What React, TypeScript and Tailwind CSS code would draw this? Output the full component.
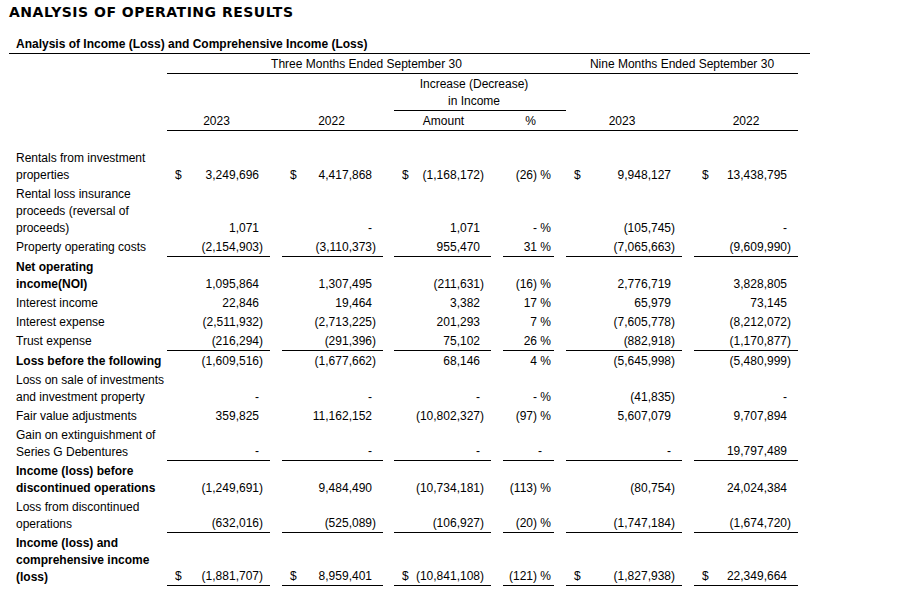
import React from "react"

type Row = {
  label: string[]
  bold?: boolean
  line?: boolean
  dollar?: boolean
  v: string[]
}

const rows: Row[] = [
  { label: ["Rentals from investment", "properties"], dollar: true, v: ["3,249,696", "4,417,868", "(1,168,172)", "(26) %", "9,948,127", "13,438,795"] },
  { label: ["Rental loss insurance", "proceeds (reversal of", "proceeds)"], v: ["1,071", "-", "1,071", "- %", "(105,745)", "-"] },
  { label: ["Property operating costs"], line: true, v: ["(2,154,903)", "(3,110,373)", "955,470", "31 %", "(7,065,663)", "(9,609,990)"] },
  { label: ["Net operating", "income(NOI)"], bold: true, v: ["1,095,864", "1,307,495", "(211,631)", "(16) %", "2,776,719", "3,828,805"] },
  { label: ["Interest income"], v: ["22,846", "19,464", "3,382", "17 %", "65,979", "73,145"] },
  { label: ["Interest expense"], v: ["(2,511,932)", "(2,713,225)", "201,293", "7 %", "(7,605,778)", "(8,212,072)"] },
  { label: ["Trust expense"], line: true, v: ["(216,294)", "(291,396)", "75,102", "26 %", "(882,918)", "(1,170,877)"] },
  { label: ["Loss before the following"], bold: true, v: ["(1,609,516)", "(1,677,662)", "68,146", "4 %", "(5,645,998)", "(5,480,999)"] },
  { label: ["Loss on sale of investments", "and investment property"], v: ["-", "-", "-", "- %", "(41,835)", "-"] },
  { label: ["Fair value adjustments"], v: ["359,825", "11,162,152", "(10,802,327)", "(97) %", "5,607,079", "9,707,894"] },
  { label: ["Gain on extinguishment of", "Series G Debentures"], line: true, v: ["-", "-", "-", "-", "-", "19,797,489"] },
  { label: ["Income (loss) before", "discontinued operations"], bold: true, v: ["(1,249,691)", "9,484,490", "(10,734,181)", "(113) %", "(80,754)", "24,024,384"] },
  { label: ["Loss from discontinued", "operations"], line: true, v: ["(632,016)", "(525,089)", "(106,927)", "(20) %", "(1,747,184)", "(1,674,720)"] },
  { label: ["Income (loss) and", "comprehensive income", "(loss)"], bold: true, dollar: true, line: true, v: ["(1,881,707)", "8,959,401", "(10,841,108)", "(121) %", "(1,827,938)", "22,349,664"] },
]

const Amount = ({ value, dollar, line }: { value: string; dollar?: boolean; line?: boolean }) => {
  const paren = value.endsWith(")")
  return (
    <div className={`flex items-end justify-between pl-2 pr-[7px] pt-[2px] ${line ? "border-b border-black" : ""}`}>
      <span>{dollar ? "$" : ""}</span>
      <span className="whitespace-nowrap">
        {value}
        {!paren && <span className="invisible">)</span>}
      </span>
    </div>
  )
}

const Percent = ({ value, line }: { value: string; line?: boolean }) => (
  <div className={`flex items-end justify-end pt-[2px] ${value.includes("%") ? "pr-[3px]" : "pr-[12px]"} ${line ? "border-b border-black" : ""}`}>
    <span className="whitespace-nowrap">{value}</span>
  </div>
)

const App = () => {
  return (
    <div className="min-h-screen bg-white px-[9px] text-black" style={{ fontFamily: '"Liberation Sans", Arial, sans-serif' }}>
      <h1 className="pt-[3px] text-[14px] font-bold leading-[18px] tracking-[0.5px]" style={{ fontFamily: '"DejaVu Sans", Verdana, sans-serif' }}>
        ANALYSIS OF OPERATING RESULTS
      </h1>

      <div className="mt-[13px] w-[801px] border-b border-black pt-[2px] pl-[7px] text-[12px] font-bold leading-[17px]">
        Analysis of Income (Loss) and Comprehensive Income (Loss)
      </div>

      <div className="grid w-[801px] grid-cols-[158px_103px_12px_101px_11px_97px_12px_51px_12px_116px_12px_104px_12px] text-[12px] leading-[17px]">
        {/* header row 1 */}
        <div />
        <div className="col-span-8 border-b border-black pt-[2px] text-center">Three Months Ended September 30</div>
        <div className="col-span-3 border-b border-black pt-[2px] text-center">Nine Months Ended September 30</div>
        <div />

        {/* header row 2 */}
        <div className="col-span-5" />
        <div className="col-span-4 border-b border-black pt-[2px] pr-[12px] text-center">
          Increase (Decrease)
          <br />
          in Income
        </div>
        <div className="col-span-4" />

        {/* header row 3 */}
        <div />
        <div className="border-b border-black pt-[2px] pr-[4px] text-center">2023</div>
        <div className="border-b border-black" />
        <div className="border-b border-black pt-[2px] pr-[2px] text-center">2022</div>
        <div className="border-b border-black" />
        <div className="border-b border-black pt-[2px] pl-[2px] text-center">Amount</div>
        <div className="border-b border-black" />
        <div className="border-b border-black pt-[2px] pl-[4px] text-center">%</div>
        <div className="border-b border-black" />
        <div className="border-b border-black pt-[2px] pr-[4px] text-center">2023</div>
        <div className="border-b border-black" />
        <div className="border-b border-black pt-[2px] text-center">2022</div>
        <div />

        {/* spacer */}
        <div className="col-span-13 h-[17px]" />

        {rows.map((r, i) => (
          <React.Fragment key={i}>
            <div className={`pt-[2px] pl-[7px] ${r.bold ? "font-bold" : ""}`}>
              {r.label.map((l, j) => (
                <div key={j} className="whitespace-nowrap">{l}</div>
              ))}
            </div>
            <Amount value={r.v[0]} dollar={r.dollar} line={r.line} />
            <div />
            <Amount value={r.v[1]} dollar={r.dollar} line={r.line} />
            <div />
            <Amount value={r.v[2]} dollar={r.dollar} line={r.line} />
            <div />
            <Percent value={r.v[3]} line={r.line} />
            <div />
            <Amount value={r.v[4]} dollar={r.dollar} line={r.line} />
            <div />
            <Amount value={r.v[5]} dollar={r.dollar} line={r.line} />
            <div />
          </React.Fragment>
        ))}
      </div>
    </div>
  )
}

export default App
